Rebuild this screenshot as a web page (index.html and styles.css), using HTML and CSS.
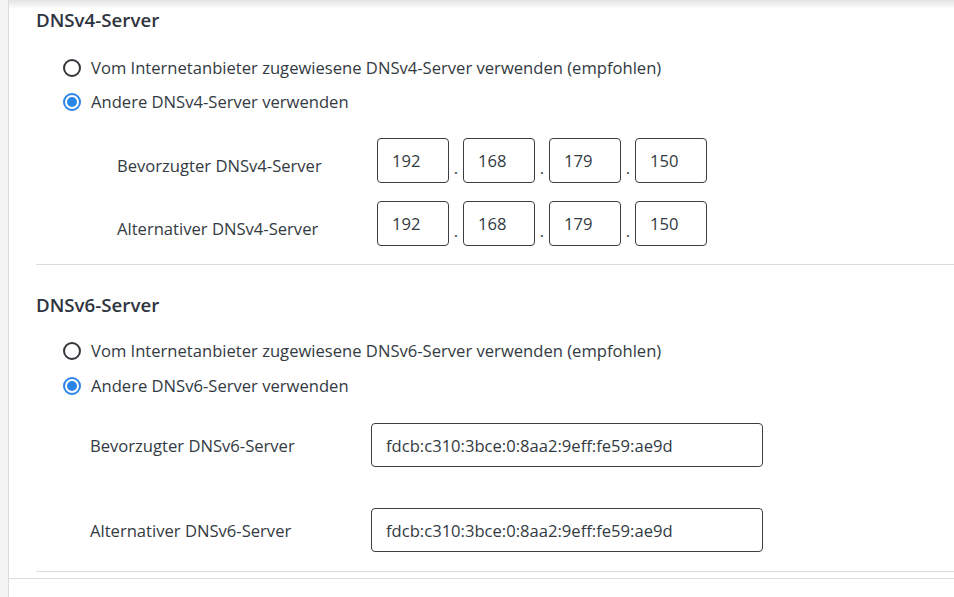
FILE: index.html
```html
<!DOCTYPE html>
<html lang="de">
<head>
<meta charset="utf-8">
<title>DNS-Server</title>
<link rel="stylesheet" href="styles.css">
</head>
<body>
<div class="page">
  <div class="rail"></div>
  <main class="content">
    <section class="section v4">
      <h2 class="title">DNSv4-Server</h2>
      <div class="radios">
        <label class="radio"><span class="dot"></span><span>Vom Internetanbieter zugewiesene DNSv4-Server verwenden (empfohlen)</span></label>
        <label class="radio checked"><span class="dot"></span><span>Andere DNSv4-Server verwenden</span></label>
      </div>
      <div class="fields">
        <div class="field">
          <span class="label">Bevorzugter DNSv4-Server</span>
          <div class="ip">
            <span class="box">192</span><span class="sep">.</span>
            <span class="box">168</span><span class="sep">.</span>
            <span class="box">179</span><span class="sep">.</span>
            <span class="box">150</span>
          </div>
        </div>
        <div class="field">
          <span class="label">Alternativer DNSv4-Server</span>
          <div class="ip">
            <span class="box">192</span><span class="sep">.</span>
            <span class="box">168</span><span class="sep">.</span>
            <span class="box">179</span><span class="sep">.</span>
            <span class="box">150</span>
          </div>
        </div>
      </div>
    </section>
    <section class="section v6">
      <h2 class="title">DNSv6-Server</h2>
      <div class="radios">
        <label class="radio"><span class="dot"></span><span>Vom Internetanbieter zugewiesene DNSv6-Server verwenden (empfohlen)</span></label>
        <label class="radio checked"><span class="dot"></span><span>Andere DNSv6-Server verwenden</span></label>
      </div>
      <div class="fields">
        <div class="field">
          <span class="label">Bevorzugter DNSv6-Server</span>
          <span class="wide">fdcb:c310:3bce:0:8aa2:9eff:fe59:ae9d</span>
        </div>
        <div class="field">
          <span class="label">Alternativer DNSv6-Server</span>
          <span class="wide">fdcb:c310:3bce:0:8aa2:9eff:fe59:ae9d</span>
        </div>
      </div>
    </section>
    <div class="footer-line"></div>
  </main>
</div>
</body>
</html>
```
FILE: styles.css
```css
* { box-sizing: border-box; }
html, body { margin: 0; padding: 0; background: #fff; }
body {
  font-family: "Open Sans", "Noto Sans", sans-serif;
  color: #333a42;
  font-size: 16.6px;
}
.page {
  display: flex;
  min-height: 597px;
  background: linear-gradient(#e2e3e5, #ffffff 9px) no-repeat;
}
.rail {
  width: 9px;
  flex: none;
  background: #f4f4f5;
  border-right: 1px solid #dcdcdc;
}
.content {
  flex: 1;
  display: flex;
  flex-direction: column;
}
.section {
  margin-left: 27px;
  border-bottom: 1px solid #dcdcdc;
}
.title {
  margin: 8px 0 0;
  font-size: 18.7px;
  line-height: 24px;
  font-weight: 600;
  color: #2e3440;
}
.v6 .title { margin-top: 28px; }
.radios {
  display: flex;
  flex-direction: column;
  gap: 14px;
  padding-left: 27px;
}
.v4 .radios { margin-top: 26px; }
.v6 .radios { margin-top: 24px; gap: 15px; }
.radio {
  display: flex;
  align-items: center;
  gap: 10px;
  height: 20px;
  line-height: 20px;
}
.dot {
  width: 18px;
  height: 18px;
  border-radius: 50%;
  border: 2px solid #33363b;
  flex: none;
  display: flex;
  align-items: center;
  justify-content: center;
}
.checked .dot { border-color: #2a85e6; }
.checked .dot::after {
  content: "";
  width: 10px;
  height: 10px;
  border-radius: 50%;
  background: #2a85e6;
}
.fields {
  display: flex;
  flex-direction: column;
}
.v4 .fields { margin-top: 26px; padding-left: 81px; gap: 18px; padding-bottom: 18px; }
.v6 .fields { margin-top: 27px; padding-left: 54px; gap: 41px; padding-bottom: 19px; }
.field {
  display: flex;
  align-items: center;
}
.v4 .label { width: 260px; padding-top: 9px; }
.v6 .label { width: 281px; padding-top: 0; }
.ip {
  display: flex;
  align-items: flex-end;
}
.box {
  width: 72px;
  height: 45px;
  border: 1px solid #3b3f45;
  border-radius: 4px;
  padding-left: 14px;
  padding-bottom: 1px;
  display: flex;
  align-items: center;
}
.sep {
  width: 14px;
  text-align: center;
  line-height: 14px;
  padding-bottom: 8px;
}
.wide {
  width: 392px;
  height: 44px;
  border: 1px solid #3b3f45;
  border-radius: 4px;
  padding-left: 14px;
  display: flex;
  align-items: center;
}
.footer-line {
  margin-top: 6px;
  border-top: 1px solid #dcdcdc;
  margin-left: -1px;
}
```
